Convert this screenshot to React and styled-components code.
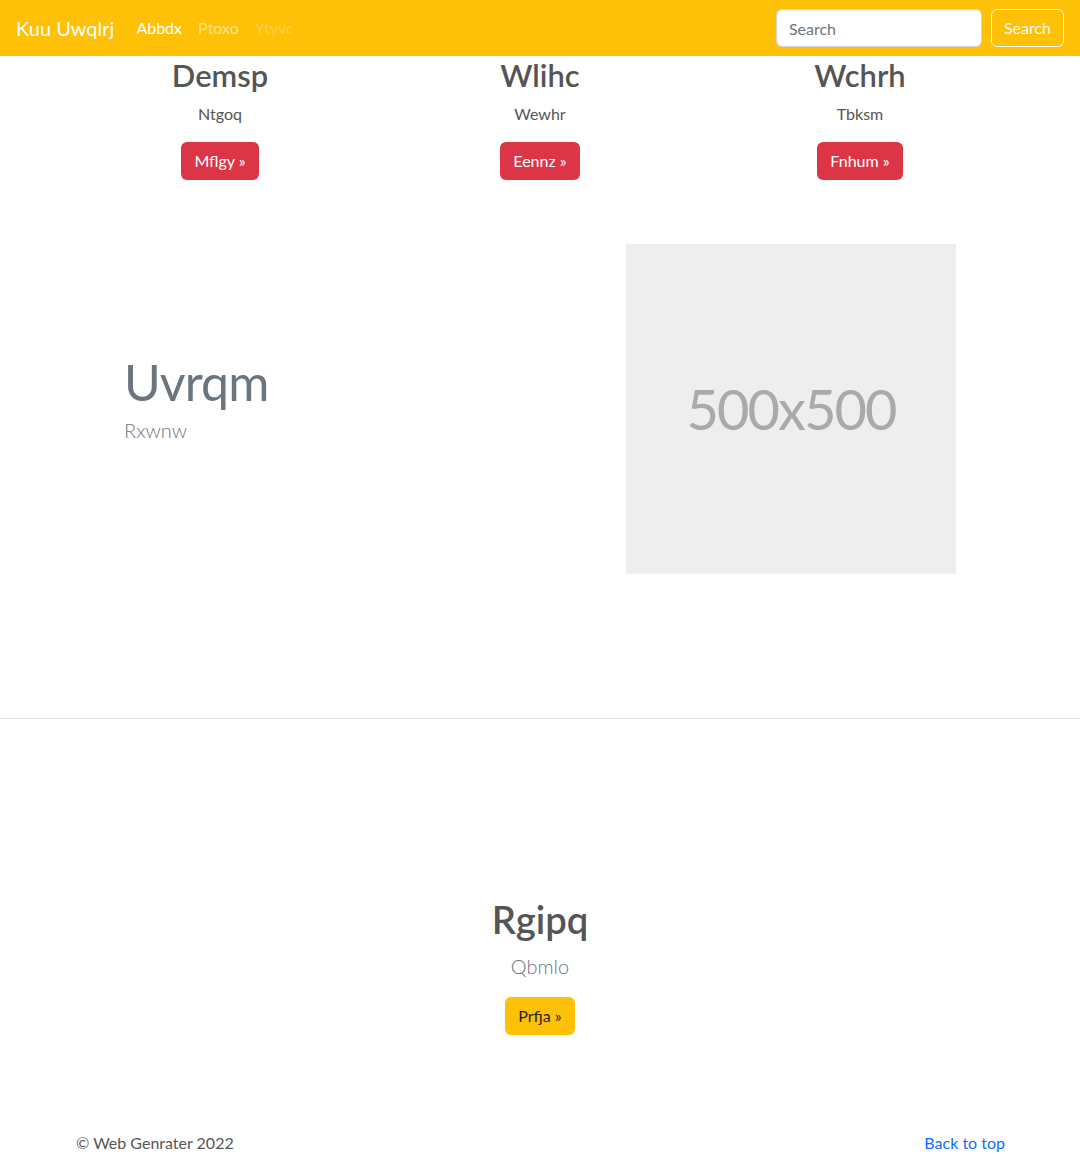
import React from "react";
import styled, { createGlobalStyle } from "styled-components";

const Global = createGlobalStyle`
  * { box-sizing: border-box; }
  body {
    margin: 0;
    font-family: Lato, "Open Sans", "Noto Sans", sans-serif;
    font-size: 16px;
    line-height: 1.5;
    color: #555;
    background: #fff;
  }
`;

const Navbar = styled.nav`
  height: 56px;
  background: #ffc107;
  display: flex;
  align-items: center;
  padding: 0 16px;
`;

const Brand = styled.a`
  font-size: 20px;
  line-height: 30px;
  color: #fff;
  text-decoration: none;
  margin-right: 14px;
`;

const NavList = styled.div`
  display: flex;
  flex: 1;
`;

const NavLink = styled.a`
  padding: 8px;
  color: ${(p) =>
    p.$state === "active"
      ? "#fff"
      : p.$state === "disabled"
      ? "rgba(255,255,255,0.25)"
      : "rgba(255,255,255,0.55)"};
  text-decoration: none;
  font-size: 16px;
`;

const SearchForm = styled.form`
  display: flex;
  gap: 9px;
`;

const SearchInput = styled.input`
  width: 206px;
  height: 38px;
  padding: 6px 12px;
  font: inherit;
  font-size: 16px;
  color: #212529;
  border: 1px solid #ced4da;
  border-radius: 6px;
  background: #fff;
  &::placeholder { color: #6c757d; }
`;

const OutlineButton = styled.button`
  height: 38px;
  padding: 6px 12px;
  font: inherit;
  font-size: 16px;
  color: #f8f9fa;
  background: transparent;
  border: 1px solid #f8f9fa;
  border-radius: 6px;
`;

const Container = styled.div`
  width: 960px;
  margin: 0 auto;
  padding: 0 12px;
`;

const ColumnsRow = styled.div`
  display: grid;
  grid-template-columns: repeat(3, 1fr);
  text-align: center;
  margin: 0 -12px;
  padding-top: 1px;
`;

const Column = styled.div`
  padding: 0 12px;
`;

const ColTitle = styled.h2`
  margin: 0 0 8px;
  font-size: 30.9px;
  font-weight: 600;
  line-height: 1.2;
  color: #555;
`;

const Para = styled.p`
  margin: 0 0 16px;
`;

const Btn = styled.a`
  display: inline-block;
  height: 38px;
  padding: 6px 12px;
  font-size: 16px;
  line-height: 24px;
  border: 1px solid transparent;
  border-radius: 6px;
  text-decoration: none;
  background: ${(p) => (p.$variant === "warning" ? "#ffc107" : "#dc3545")};
  color: ${(p) => (p.$variant === "warning" ? "#212529" : "#fff")};
`;

const Featurette = styled.div`
  display: grid;
  grid-template-columns: 1fr 330px;
  align-items: center;
  padding: 64px 64px;
  margin: 0 -12px;
`;

const FeatureHeading = styled.h2`
  margin: 0 0 8px;
  font-size: 50px;
  font-weight: 400;
  line-height: 1;
  letter-spacing: -0.8px;
  color: #6c757d;
`;

const Lead = styled.p`
  margin: 0 0 16px;
  font-size: 20px;
  font-weight: 300;
  color: #6c757d;
`;

const Placeholder = styled.div`
  width: 330px;
  height: 330px;
  background: #eee;
  color: #aaa;
  font-size: 56px;
  letter-spacing: -2px;
  display: flex;
  align-items: center;
  justify-content: center;
`;

const Divider = styled.hr`
  margin: 80px 0 0;
  border: 0;
  border-top: 1px solid #e5e5e5;
`;

const Hero = styled.section`
  text-align: center;
  padding: 178px 0 96px;
`;

const HeroTitle = styled.h1`
  margin: 0 0 8px;
  font-size: 38.2px;
  font-weight: 600;
  line-height: 1.2;
  color: #555;
`;

const Footer = styled.footer`
  display: flex;
  justify-content: space-between;
  padding: 0 3px 0 4px;
`;

const FooterLink = styled.a`
  color: #0d6efd;
  text-decoration: none;
`;

const cols = [
  { t: "Demsp", p: "Ntgoq", b: "Mflgy" },
  { t: "Wlihc", p: "Wewhr", b: "Eennz" },
  { t: "Wchrh", p: "Tbksm", b: "Fnhum" },
];

export default function App() {
  return (
    <>
      <Global />
      <Navbar>
        <Brand href="#">Kuu Uwqlrj</Brand>
        <NavList>
          <NavLink $state="active" href="#">Abbdx</NavLink>
          <NavLink href="#">Ptoxo</NavLink>
          <NavLink $state="disabled">Ytyvc</NavLink>
        </NavList>
        <SearchForm onSubmit={(e) => e.preventDefault()}>
          <SearchInput type="search" placeholder="Search" />
          <OutlineButton type="submit">Search</OutlineButton>
        </SearchForm>
      </Navbar>
      <Container>
        <ColumnsRow>
          {cols.map((c) => (
            <Column key={c.t}>
              <ColTitle>{c.t}</ColTitle>
              <Para>{c.p}</Para>
              <Btn href="#">{c.b} »</Btn>
            </Column>
          ))}
        </ColumnsRow>
        <Featurette>
          <div>
            <FeatureHeading>Uvrqm</FeatureHeading>
            <Lead>Rxwnw</Lead>
          </div>
          <Placeholder>500x500</Placeholder>
        </Featurette>
      </Container>
      <Divider />
      <Hero>
        <HeroTitle>Rgipq</HeroTitle>
        <Lead>Qbmlo</Lead>
        <Btn $variant="warning" href="#">Prfja »</Btn>
      </Hero>
      <Container>
        <Footer>
          <span>© Web Genrater 2022</span>
          <FooterLink href="#">Back to top</FooterLink>
        </Footer>
      </Container>
    </>
  );
}
